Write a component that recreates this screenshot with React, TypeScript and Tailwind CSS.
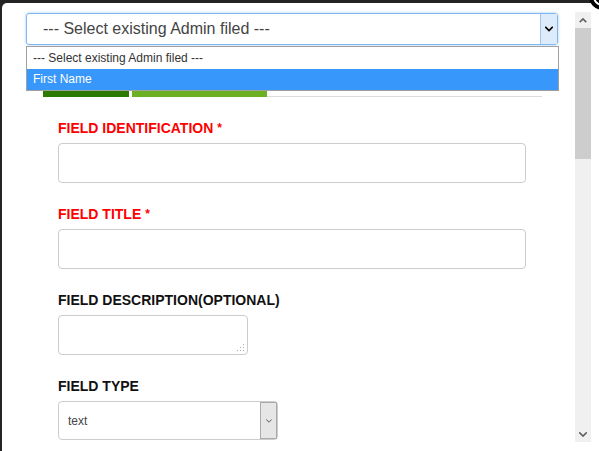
import React from "react";

function Chevron({ className, color = "#000", width = 2 }: { className?: string; color?: string; width?: number }) {
  return (
    <svg viewBox="0 0 10 6" className={className} fill="none">
      <polyline points="1,1 5,5 9,1" stroke={color} strokeWidth={width} strokeLinecap="square" />
    </svg>
  );
}

function Field({ label, required, children }: { label: string; required?: boolean; children: React.ReactNode }) {
  return (
    <div>
      <div
        className={`text-[14px] font-bold leading-[20px] mb-[5px] ${
          required ? "text-[#ff0000]" : "text-[#111]"
        }`}
      >
        {label}
        {required && <span className="ml-[4px] text-[12px] align-top">*</span>}
      </div>
      {children}
    </div>
  );
}

export default function App() {
  return (
    <div className="relative w-[599px] h-[451px] overflow-hidden bg-[#242424] pt-[3px] pl-[2px] font-['Liberation_Sans',Arial,sans-serif]">
      <div className="flex h-full bg-white rounded-tl-[5px]">
        {/* Content */}
        <div className="w-[573px] pt-[10px]">
          {/* Admin field select with open list */}
          <div className="relative ml-[24px] w-[532px]">
            <div className="flex h-[32px] items-center rounded-[3px] border border-[#80b7ee] shadow-[0_0_3px_#9cc8f5]">
              <span className="flex-1 pl-[16px] text-[16px] text-[#444]">--- Select existing Admin filed ---</span>
              <div className="flex h-full w-[17px] items-center justify-center border-l border-[#9fc3ea] bg-[#deebfa]">
                <Chevron className="w-[8px] h-[6px]" />
              </div>
            </div>
            <div className="absolute left-0 top-[33px] z-10 w-[533px] border border-[#a0a0a0] bg-white text-[12px]">
              <div className="h-[22px] pl-[6px] leading-[22px] text-[#333]">--- Select existing Admin filed ---</div>
              <div className="h-[21px] bg-[#3797fb] pl-[6px] leading-[21px] text-white">First Name</div>
            </div>
          </div>

          {/* Tabs */}
          <div className="ml-[41px] mt-[46px] flex h-[6px] w-[499px]">
            <div className="w-[86px] bg-[#2c7a00]" />
            <div className="ml-[3px] w-[135px] bg-[#6cb024]" />
            <div className="flex-1 border-b border-[#dcdcdc]" />
          </div>

          {/* Form */}
          <div className="mt-[21px] flex flex-col gap-[21px] pl-[56px]">
            <Field label="FIELD IDENTIFICATION" required>
              <div className="h-[40px] w-[468px] rounded-[4px] border border-[#ccc]" />
            </Field>
            <Field label="FIELD TITLE" required>
              <div className="h-[40px] w-[468px] rounded-[4px] border border-[#ccc]" />
            </Field>
            <Field label="FIELD DESCRIPTION(OPTIONAL)">
              <div className="relative h-[40px] w-[190px] rounded-[4px] border border-[#ccc]">
                <svg className="absolute right-[2px] bottom-[2px] w-[9px] h-[9px]" viewBox="0 0 9 9">
                  <rect x="7" y="1" width="1" height="1" fill="#aaa" />
                  <rect x="4" y="4" width="1" height="1" fill="#aaa" />
                  <rect x="7" y="4" width="1" height="1" fill="#aaa" />
                  <rect x="1" y="7" width="1" height="1" fill="#aaa" />
                  <rect x="4" y="7" width="1" height="1" fill="#aaa" />
                  <rect x="7" y="7" width="1" height="1" fill="#aaa" />
                </svg>
              </div>
            </Field>
            <Field label="FIELD TYPE">
              <div className="flex h-[39px] w-[220px] items-center rounded-[4px] border border-[#ccc]">
                <span className="flex-1 pl-[9px] text-[12px] text-[#444]">text</span>
                <div className="flex h-[37px] w-[17px] items-center justify-center border border-[#aaa] bg-[#e6e6e6]">
                  <Chevron className="w-[6px] h-[4px]" color="#555" width={1.6} />
                </div>
              </div>
            </Field>
          </div>
        </div>

        {/* Scrollbar */}
        <div className="mt-[9px] flex h-[430px] w-[16px] flex-col bg-[#f0f0f0]">
          <div className="flex h-[16px] items-center justify-center">
            <svg viewBox="0 0 10 6" className="w-[8px] h-[5px]" fill="none">
              <polyline points="1,5 5,1 9,5" stroke="#606060" strokeWidth="2" />
            </svg>
          </div>
          <div className="h-[131px] bg-[#cdcdcd]" />
          <div className="flex-1" />
          <div className="flex h-[16px] items-center justify-center">
            <Chevron className="w-[8px] h-[5px]" color="#606060" />
          </div>
        </div>
      </div>

      {/* Close button */}
      <div className="absolute right-[-17px] top-[-17px] flex h-[27px] w-[27px] items-center justify-center rounded-full bg-black">
        <div className="h-[19px] w-[19px] rounded-full border-2 border-white" />
      </div>
    </div>
  );
}
